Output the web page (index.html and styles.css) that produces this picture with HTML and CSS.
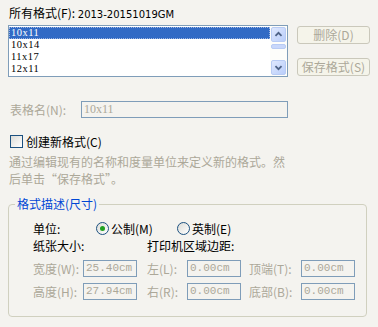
FILE: index.html
```html
<!DOCTYPE html>
<html lang="zh-CN">
<head>
  <meta charset="UTF-8" />
  <title>格式</title>
  <link rel="stylesheet" href="styles.css">
</head>
<body>
  <div class="dialog">
    <div class="all-label">所有格式(<u>F</u>): <span class="cur">2013-20151019GM</span></div>

    <div class="list-row">
      <div class="listbox">
        <div class="items">
          <div class="item sel">10x11</div>
          <div class="item">10x14</div>
          <div class="item">11x17</div>
          <div class="item">12x11</div>
        </div>
        <div class="scroll">
          <div class="arrow">
            <svg width="15" height="15" viewBox="0 0 15 15"><path d="M4 9 L7.5 5.5 L11 9" fill="none" stroke="#4d6185" stroke-width="2"/></svg>
          </div>
          <div class="track"><div class="thumb"></div></div>
          <div class="arrow">
            <svg width="15" height="15" viewBox="0 0 15 15"><path d="M4 6 L7.5 9.5 L11 6" fill="none" stroke="#4d6185" stroke-width="2"/></svg>
          </div>
        </div>
      </div>
      <div class="btns">
        <button class="btn" disabled>删除(<u>D</u>)</button>
        <button class="btn" disabled>保存格式(<u>S</u>)</button>
      </div>
    </div>

    <div class="name-row">
      <span class="dim name-label">表格名(<u>N</u>):</span>
      <div class="field wide">10x11</div>
    </div>

    <div class="check-row">
      <span class="checkbox"></span>
      <span>创建新格式(<u>C</u>)</span>
    </div>

    <p class="desc">通过编辑现有的名称和度量单位来定义新的格式。然<br>后单击“保存格式”。</p>

    <fieldset class="group">
      <legend>格式描述(尺寸)</legend>
      <div class="unit-row">
        <span class="unit-label">单位:</span>
        <span class="radio on"></span><span class="radio-text">公制(<u>M</u>)</span>
        <span class="radio"></span><span class="radio-text">英制(<u>E</u>)</span>
      </div>
      <div class="head-row">
        <span class="paper">纸张大小:</span>
        <span>打印机区域边距:</span>
      </div>
      <div class="size-row">
        <span class="dim l1">宽度(<u>W</u>):</span><div class="field sm">25.40cm</div>
        <span class="dim l2">左(<u>L</u>):</span><div class="field sm">0.00cm</div>
        <span class="dim l3">顶端(<u>T</u>):</span><div class="field sm">0.00cm</div>
      </div>
      <div class="size-row">
        <span class="dim l1">高度(<u>H</u>):</span><div class="field sm">27.94cm</div>
        <span class="dim l2">右(<u>R</u>):</span><div class="field sm">0.00cm</div>
        <span class="dim l3">底部(<u>B</u>):</span><div class="field sm">0.00cm</div>
      </div>
    </fieldset>
  </div>
</body>
</html>
```

FILE: styles.css
```css
* {
  box-sizing: border-box;
}
body {
  margin: 0;
  width: 378px;
  height: 327px;
  background: #f4f3ef;
  color: #000;
  font-family: "Noto Sans CJK SC", sans-serif;
  font-size: 12px;
  overflow: hidden;
}

u {
  text-decoration: none;
}

.dialog {
  padding: 5px 8px 0 8px;
}

.all-label {
  height: 16px;
  line-height: 16px;
  padding-left: 1px;
}

.all-label .cur {
  font-family: "DejaVu Sans", sans-serif;
  font-size: 10px;
}

.list-row {
  display: flex;
  margin-top: 4px;
}

.listbox {
  width: 280px;
  height: 52px;
  border: 1px solid #7f9db9;
  background: #fff;
  display: flex;
}

.items {
  flex: 1;
  padding: 1px 0 0 0;
}

.item {
  height: 12px;
  line-height: 12px;
  padding-left: 2px;
  font-family: "Liberation Serif", serif;
  font-size: 10.5px;
  letter-spacing: 0.5px;
}

.item.sel {
  background: #316ac5;
  color: #fff;
  outline: 1px dotted #9cb4e0;
  outline-offset: -1px;
}

.scroll {
  width: 17px;
  display: flex;
  flex-direction: column;
  background: #fdfdfa;
  padding: 1px;
}

.arrow {
  height: 15px;
  border: 1px solid #b8cbf4;
  border-radius: 2px;
  background: linear-gradient(135deg, #dfe8fe, #b9cdfa);
  display: flex;
  align-items: center;
  justify-content: center;
}

.track {
  flex: 1;
  padding-top: 2px;
}

.thumb {
  height: 5px;
  border: 1px solid #b8cbf4;
  border-radius: 2px;
  background: #c8d7fb;
}

.btns {
  display: flex;
  flex-direction: column;
  margin-left: 9px;
  padding-top: 1px;
  gap: 14px;
}

.btn {
  width: 73px;
  height: 18px;
  padding: 0;
  border: 1px solid #cac8bb;
  border-radius: 3px;
  background: #f5f4ea;
  color: #aca899;
  font-family: "Noto Sans CJK SC", sans-serif;
  font-size: 12px;
  line-height: 16px;
}

.dim {
  color: #aca899;
}

.name-row {
  display: flex;
  align-items: center;
  margin-top: 24px;
  padding-left: 2px;
}

.name-label {
  width: 71px;
}

.field {
  height: 17px;
  border: 1px solid #7f9db9;
  background: #f4f3ef;
  color: #aca899;
  line-height: 15px;
  padding-left: 2px;
  font-family: "Liberation Mono", monospace;
  font-size: 11px;
}

.field.wide {
  width: 207px;
  font-family: "Liberation Serif", serif;
  font-size: 12px;
}

.field.sm {
  width: 54px;
}

.check-row {
  display: flex;
  align-items: center;
  margin-top: 16px;
  padding-left: 2px;
  height: 14px;
}

.checkbox {
  width: 13px;
  height: 13px;
  border: 1px solid #1c5180;
  background: linear-gradient(135deg, #dcdcd7, #ffffff);
  margin-right: 3px;
}

.desc {
  margin: 5px 0 0 1px;
  color: #aca899;
  line-height: 17px;
}

.group {
  margin: 10px 0 0 0;
  width: 359px;
  height: 120px;
  border: 1px solid #d0d0bf;
  border-radius: 4px;
  padding: 8px 0 0 24px;
}

.group legend {
  color: #0046d5;
  padding: 0 2px;
  margin-left: -18px;
  line-height: 14px;
}

.unit-row {
  display: flex;
  align-items: center;
  height: 18px;
}

.unit-label {
  width: 63px;
}

.radio {
  width: 13px;
  height: 13px;
  border: 1px solid #1c5180;
  border-radius: 50%;
  background: linear-gradient(135deg, #dcdcd7, #ffffff);
  margin-right: 2px;
  position: relative;
}

.radio.on::after {
  content: "";
  position: absolute;
  left: 3px;
  top: 3px;
  width: 5px;
  height: 5px;
  border-radius: 50%;
  background: #21a121;
}

.radio-text {
  width: 66px;
}

.head-row {
  display: flex;
  height: 18px;
  line-height: 18px;
}

.paper {
  width: 114px;
}

.size-row {
  display: flex;
  align-items: center;
  margin-top: 4px;
  height: 19px;
}

.l1 {
  width: 50px;
}

.l2 {
  width: 40px;
  margin-left: 10px;
}

.l3 {
  width: 52px;
  margin-left: 8px;
}
```
